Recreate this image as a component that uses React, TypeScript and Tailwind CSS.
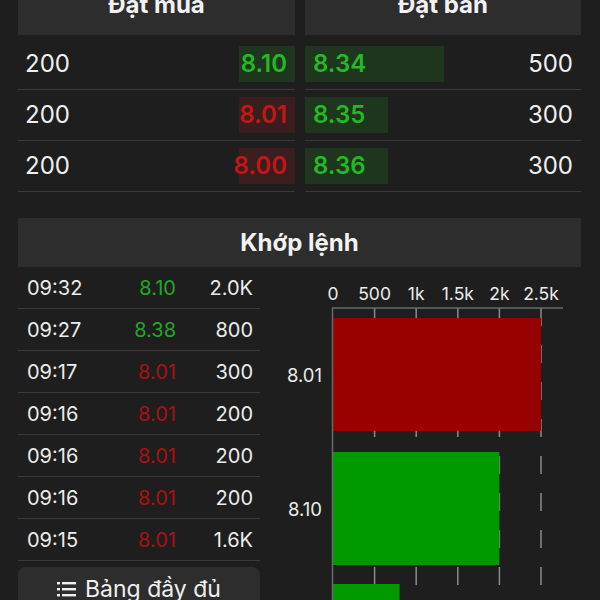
import React from "react";

type Level = { price: string; vol: number; color: "green" | "red" };

const buyLevels: Level[] = [
  { price: "8.10", vol: 200, color: "green" },
  { price: "8.01", vol: 200, color: "red" },
  { price: "8.00", vol: 200, color: "red" },
];

const sellLevels: Level[] = [
  { price: "8.34", vol: 500, color: "green" },
  { price: "8.35", vol: 300, color: "green" },
  { price: "8.36", vol: 300, color: "green" },
];

const trades = [
  { time: "09:32", price: "8.10", vol: "2.0K", up: true },
  { time: "09:27", price: "8.38", vol: "800", up: true },
  { time: "09:17", price: "8.01", vol: "300", up: false },
  { time: "09:16", price: "8.01", vol: "200", up: false },
  { time: "09:16", price: "8.01", vol: "200", up: false },
  { time: "09:16", price: "8.01", vol: "200", up: false },
  { time: "09:15", price: "8.01", vol: "1.6K", up: false },
];

// px per share for the depth highlight
const depthScale = 139 / 500;

const BookHeader = ({ title }: { title: string }) => (
  <div className="h-[50px] bg-[#2d2d2d] pt-[6px] text-center text-[24px] font-bold leading-[28px] text-[#f2f2f2]">
    {title}
  </div>
);

const BuyRow = ({ level }: { level: Level }) => (
  <div className="flex h-[51px] items-center justify-between border-b border-[#3a3a3a] pl-[7px]">
    <span className="text-[24px] text-[#f0f0f0]">{level.vol}</span>
    <div className="relative flex h-[36px] items-center pr-[8px]">
      <div
        className={
          level.color === "green"
            ? "absolute top-0 right-0 bottom-0 bg-[#1d361d]"
            : "absolute top-0 right-0 bottom-0 bg-[#3a1e1e]"
        }
        style={{ width: level.vol * depthScale }}
      />
      <span
        className={
          level.color === "green"
            ? "relative text-[24px] font-semibold text-[#22b922]"
            : "relative text-[24px] font-semibold text-[#c41616]"
        }
      >
        {level.price}
      </span>
    </div>
  </div>
);

const SellRow = ({ level }: { level: Level }) => (
  <div className="flex h-[51px] items-center justify-between border-b border-[#3a3a3a] pr-[8px]">
    <div className="relative flex h-[36px] items-center pl-[8px]">
      <div
        className="absolute top-0 bottom-0 left-0 bg-[#1d361d]"
        style={{ width: level.vol * depthScale }}
      />
      <span className="relative text-[24px] font-semibold text-[#22b922]">
        {level.price}
      </span>
    </div>
    <span className="text-[24px] text-[#f0f0f0]">{level.vol}</span>
  </div>
);

const ListIcon = () => (
  <svg width="19" height="18" viewBox="0 0 19 18" className="mr-[9px]">
    <rect x="0" y="2" width="3" height="2.4" fill="#f0f0f0" />
    <rect x="0" y="8" width="3" height="2.4" fill="#f0f0f0" />
    <rect x="0" y="14" width="3" height="2.4" fill="#f0f0f0" />
    <rect x="5" y="2" width="14" height="2.4" fill="#f0f0f0" />
    <rect x="5" y="8" width="14" height="2.4" fill="#f0f0f0" />
    <rect x="5" y="14" width="14" height="2.4" fill="#f0f0f0" />
  </svg>
);

const ticks = [
  { label: "0", x: 73 },
  { label: "500", x: 114.6 },
  { label: "1k", x: 156.2 },
  { label: "1.5k", x: 197.8 },
  { label: "2k", x: 239.4 },
  { label: "2.5k", x: 281 },
];

const bars = [
  { label: "8.01", vol: 2500, fill: "#990000", y: 51 },
  { label: "8.10", vol: 2000, fill: "#009900", y: 185 },
  { label: "8.38", vol: 800, fill: "#009900", y: 317 },
];

const VolumeChart = () => (
  <svg width="340" height="333" viewBox="0 0 340 333" className="block">
    {ticks.map((t) => (
      <text
        key={t.label}
        x={t.x}
        y={33}
        textAnchor="middle"
        fontSize="17.5"
        fill="#ececec"
        fontFamily="Inter, 'Liberation Sans', sans-serif"
      >
        {t.label}
      </text>
    ))}
    {ticks.slice(1).map((t) => (
      <line
        key={t.label}
        x1={t.x}
        x2={t.x}
        y1={41}
        y2={333}
        stroke="#8a8a8a"
        strokeWidth="1.5"
        strokeDasharray="18 19"
      />
    ))}
    {bars.map((b) => (
      <g key={b.label}>
        <rect x={73} y={b.y} width={(b.vol / 2500) * 208} height={113} fill={b.fill} />
        <text
          x={62}
          y={b.y + 64}
          textAnchor="end"
          fontSize="18.5"
          fill="#ececec"
          fontFamily="Inter, 'Liberation Sans', sans-serif"
        >
          {b.label}
        </text>
      </g>
    ))}
    <line x1={72} x2={303} y1={41} y2={41} stroke="#6a6a6a" strokeWidth="1.5" />
    <line x1={72.5} x2={72.5} y1={41} y2={333} stroke="#6a6a6a" strokeWidth="1.5" />
  </svg>
);

export default function App() {
  return (
    <div
      className="h-[600px] w-[600px] overflow-hidden bg-[#1e1e1e]"
      style={{ fontFamily: "Inter, 'Liberation Sans', sans-serif" }}
    >
      <div className="-mt-[15px] grid grid-cols-[277px_276px] gap-[10px] pl-[18px]">
        <div>
          <BookHeader title="Đặt mua" />
          <div className="mt-[4px]">
            {buyLevels.map((l) => (
              <BuyRow key={l.price} level={l} />
            ))}
          </div>
        </div>
        <div>
          <BookHeader title="Đặt bán" />
          <div className="mt-[4px]">
            {sellLevels.map((l) => (
              <SellRow key={l.price} level={l} />
            ))}
          </div>
        </div>
      </div>

      <div className="mt-[26px] ml-[18px] flex h-[49px] w-[563px] items-center justify-center bg-[#2d2d2d] text-[24px] font-bold text-[#f2f2f2]">
        Khớp lệnh
      </div>

      <div className="flex">
        <div className="w-[260px] pl-[18px]">
          {trades.map((t, i) => (
            <div
              key={i}
              className="flex h-[42px] items-center border-b border-[#3a3a3a] pr-[7px] pl-[9px] text-[20px] text-[#ececec]"
            >
              <span className="w-[80px]">{t.time}</span>
              <span
                className={
                  t.up
                    ? "w-[69px] text-right text-[#22a822]"
                    : "w-[69px] text-right text-[#a81212]"
                }
              >
                {t.price}
              </span>
              <span className="flex-1 text-right">{t.vol}</span>
            </div>
          ))}
          <div className="mt-[6px] flex h-[44px] items-center justify-center rounded-[8px] bg-[#2d2d2d] text-[23px] text-[#f0f0f0]">
            <ListIcon />
            Bảng đầy đủ
          </div>
        </div>
        <VolumeChart />
      </div>
    </div>
  );
}
